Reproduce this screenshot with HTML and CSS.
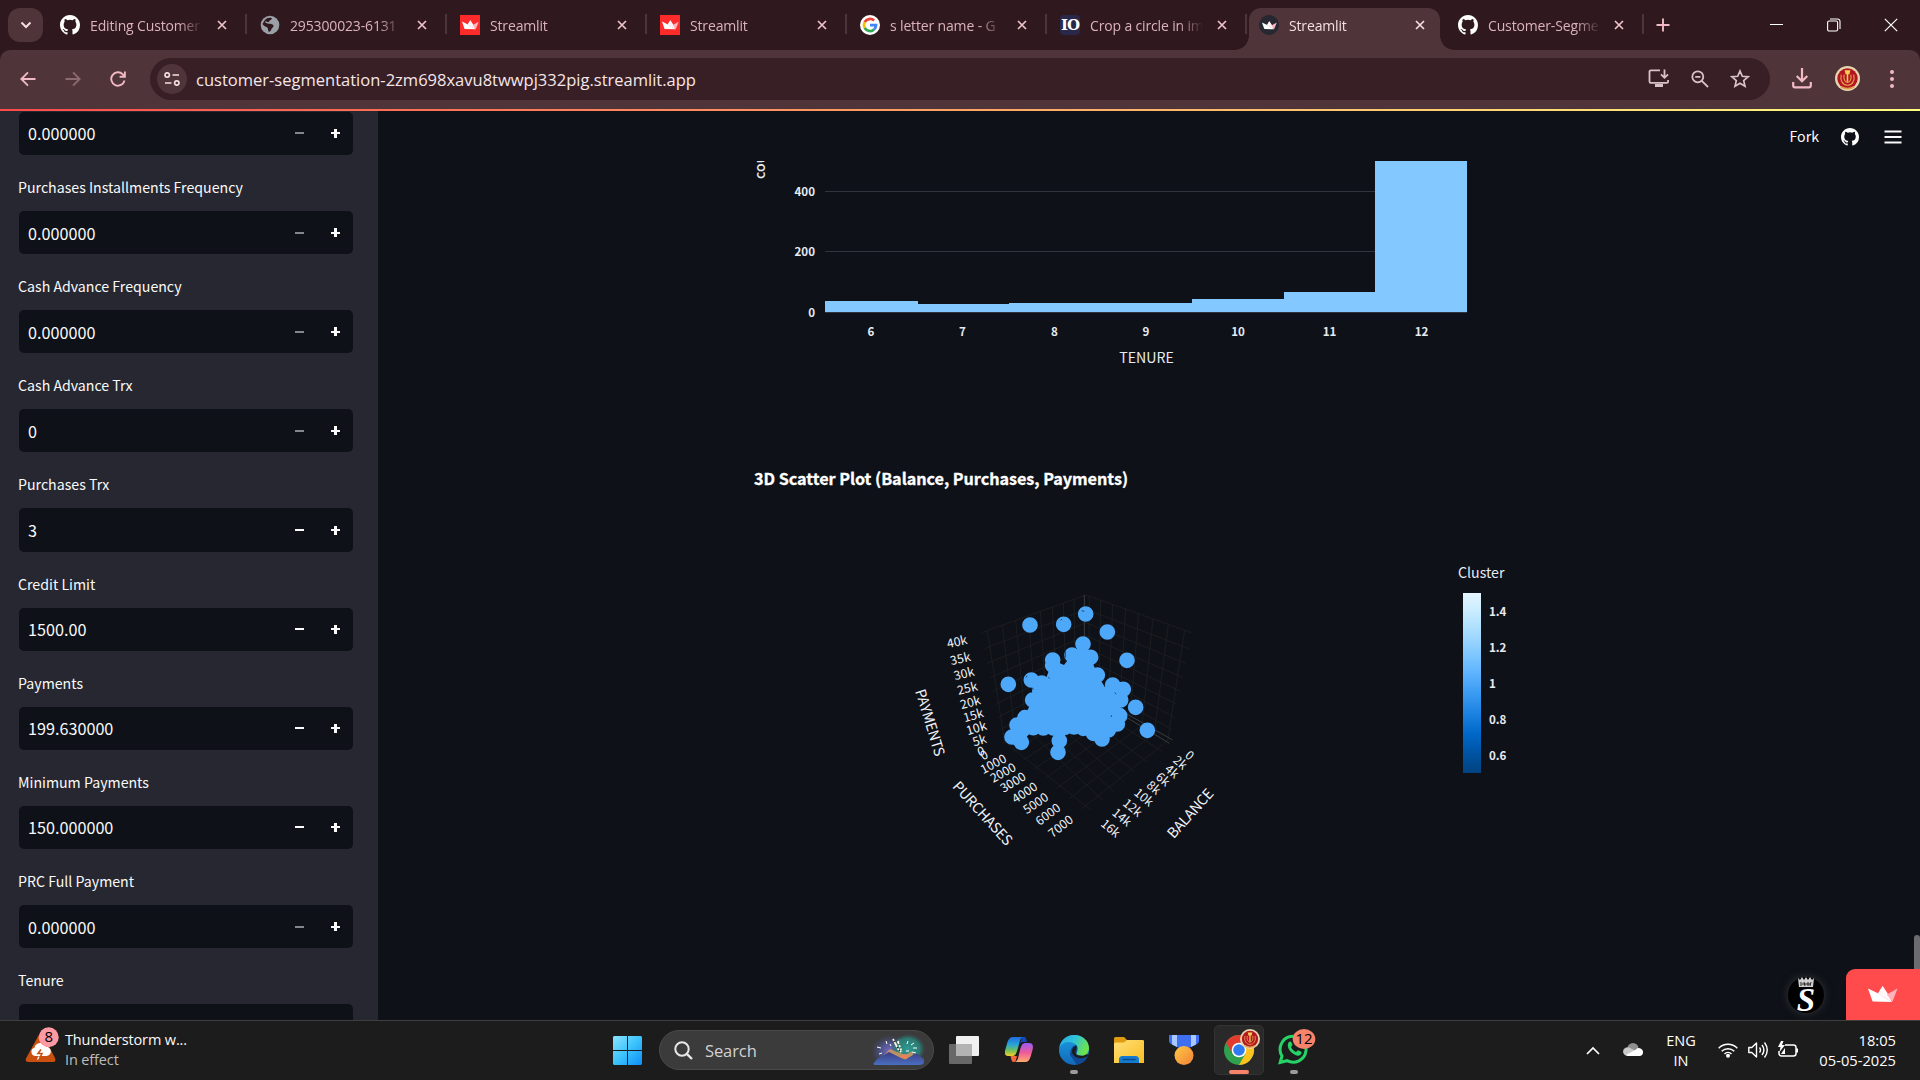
FILE: index.html
```html
<!DOCTYPE html>
<html lang="en">
<head>
<meta charset="utf-8">
<title>Streamlit</title>
<link rel="stylesheet" href="styles.css">
</head>
<body>
<svg class="defs" width="0" height="0" aria-hidden="true">
  <defs>
    <symbol id="github" viewBox="0 0 16 16"><path fill="#fff" d="M8 0C3.58 0 0 3.58 0 8c0 3.54 2.29 6.53 5.47 7.59.4.07.55-.17.55-.38 0-.19-.01-.82-.01-1.49-2.01.37-2.53-.49-2.69-.94-.09-.23-.48-.94-.82-1.13-.28-.15-.68-.52-.01-.53.63-.01 1.08.58 1.23.82.72 1.21 1.87.87 2.33.66.07-.52.28-.87.51-1.07-1.78-.2-3.64-.89-3.64-3.95 0-.87.31-1.59.82-2.15-.08-.2-.36-1.02.08-2.12 0 0 .67-.21 2.2.82a7.6 7.6 0 0 1 4 0c1.53-1.04 2.2-.82 2.2-.82.44 1.1.16 1.92.08 2.12.51.56.82 1.27.82 2.15 0 3.07-1.87 3.75-3.65 3.95.29.25.54.73.54 1.48 0 1.07-.01 1.93-.01 2.2 0 .21.15.46.55.38A8.01 8.01 0 0 0 16 8c0-4.42-3.58-8-8-8z"/></symbol>
    <symbol id="crown" viewBox="0 0 30 17"><path fill="#fff" d="M0 2.5 10.5 7.6 24 16 4.6 15.6Z"/><path fill="#ffc9cf" d="M14.6 0 20.3 8.3 24 16 10 7.4Z"/><path fill="#fff" opacity=".85" d="M14.6 0 10 7.4 24 16 19 7Z"/><path fill="#ffb3bb" d="M29.5 2.6 24.5 15.6 18.8 8.4Z"/></symbol>
    <symbol id="close" viewBox="0 0 10 10"><path d="M1 1l8 8M9 1L1 9" fill="none" stroke="currentColor" stroke-width="1.7"/></symbol>
    <symbol id="crest" viewBox="0 0 26 26"><circle cx="13" cy="13" r="13" fill="#e6d6ae"/><circle cx="13" cy="13" r="10.6" fill="#b5151f"/><path d="M6.5 9c-1.5 6 1.5 11 6.500 11s8-5 6.500-11M9.500 9c-.8 4.500.7 8 3.500 8s4.300-3.500 3.500-8" fill="none" stroke="#dfa04f" stroke-width="1.200"/><path d="M6 21.500q7 4 14 0" fill="none" stroke="#dfa04f" stroke-width="1.800"/><path d="M10 4.500h6l-1 4h-1.200v8h-1.600v-8H11z" fill="#f2cf57"/></symbol>
    <linearGradient id="win" x1="0" y1="0" x2="1" y2="1"><stop offset="0" stop-color="#8be3fd"/><stop offset=".5" stop-color="#3cc3fb"/><stop offset="1" stop-color="#0c8df6"/></linearGradient>
    <linearGradient id="scale" x1="0" y1="0" x2="0" y2="1"><stop offset="0" stop-color="#e4f5ff"/><stop offset=".11" stop-color="#c7ebff"/><stop offset=".22" stop-color="#a6dcff"/><stop offset=".33" stop-color="#83c9ff"/><stop offset=".44" stop-color="#60b4ff"/><stop offset=".55" stop-color="#3d9df3"/><stop offset=".67" stop-color="#1c83e1"/><stop offset=".78" stop-color="#0068c9"/><stop offset=".89" stop-color="#0054a3"/><stop offset="1" stop-color="#004280"/></linearGradient>
  </defs>
</svg>

<header class="tabstrip">
  <button class="tab-search"><svg width="12" height="8" viewBox="0 0 12 8"><path d="M1.500 1.500 6 6l4.500-4.500" fill="none" stroke="#f3dfe1" stroke-width="2"/></svg></button>
  <div class="tab"><svg class="fav"><use href="#github"/></svg><span class="name">Editing Customer</span><svg class="x"><use href="#close"/></svg></div>
  <div class="tab"><svg class="fav" viewBox="0 0 20 20"><circle cx="10" cy="10" r="9.300" fill="#9aa0a6"/><path d="M4.500 5.500C7 2.500 10 2.500 12 3.300c-.5 2-3.500 2-3 4.200.6 1.800 4 1 4.500 3.200.3 1.800-1.500 1.600-2 3.300-.4 1.500-1.500 2.500-2.500 3-1.500-1.500-.5-3-1.500-4.200C6.500 11.600 4 11.500 2.500 9" fill="#2f191e"/><path d="M5.500 6.500c1 2 3.500.5 4.500 2" stroke="#9aa0a6" stroke-width="1.500" fill="none"/></svg><span class="name">295300023-6131</span><svg class="x"><use href="#close"/></svg></div>
  <div class="tab"><span class="fav red"><svg width="17" height="10"><use href="#crown"/></svg></span><span class="name">Streamlit</span><svg class="x"><use href="#close"/></svg></div>
  <div class="tab"><span class="fav red"><svg width="17" height="10"><use href="#crown"/></svg></span><span class="name">Streamlit</span><svg class="x"><use href="#close"/></svg></div>
  <div class="tab"><svg class="fav" viewBox="0 0 20 20"><circle cx="10" cy="10" r="10" fill="#fff"/><g fill="none" stroke-width="2.800"><path d="M14.100 5.500A6 6 0 0 0 4.700 7.200" stroke="#ea4335"/><path d="M4.700 7.200a6 6 0 0 0 0 5.600" stroke="#fbbc05"/><path d="M4.700 12.800a6 6 0 0 0 9.300 1.700" stroke="#34a853"/><path d="M14 14.500a6 6 0 0 0 2-4.300h-6" stroke="#4285f4"/></g></svg><span class="name">s letter name - G</span><svg class="x"><use href="#close"/></svg></div>
  <div class="tab"><span class="fav io">IO</span><span class="name">Crop a circle in im</span><svg class="x"><use href="#close"/></svg></div>
  <div class="tab active"><span class="fav dark"><svg width="15" height="9"><use href="#crown"/></svg></span><span class="name">Streamlit</span><svg class="x"><use href="#close"/></svg></div>
  <div class="tab last"><svg class="fav"><use href="#github"/></svg><span class="name">Customer-Segme</span><svg class="x"><use href="#close"/></svg></div>
  <svg class="plus" width="14" height="14" viewBox="0 0 14 14"><path d="M7 .5v13M.5 7h13" stroke="#f0b9c3" stroke-width="1.900"/></svg>
  <div class="winbtns">
    <svg width="14" height="14" viewBox="0 0 14 14"><path d="M0 6.500h13" stroke="#fff"/></svg>
    <svg width="14" height="14" viewBox="0 0 14 14"><rect x=".6" y="3" width="10" height="10" rx="1.500" fill="none" stroke="#fff" stroke-width="1.100"/><path d="M3 1h7.500A2.500 2.500 0 0 1 13 3.500V11" fill="none" stroke="#fff" stroke-width="1.100"/></svg>
    <svg width="14" height="14" viewBox="0 0 14 14"><path d="M.8.800l12.400 12.400M13.200.800.8 13.200" stroke="#fff" stroke-width="1.200"/></svg>
  </div>
</header>

<nav class="toolbar">
  <div class="navbtns">
    <svg width="16" height="16" viewBox="0 0 16 16"><path d="M15.500 8H1.500M8 1.300 1.300 8 8 14.700" fill="none" stroke="#f0b9c3" stroke-width="1.900"/></svg>
    <svg width="16" height="16" viewBox="0 0 16 16"><path d="M.5 8h14M8 1.300 14.700 8 8 14.700" fill="none" stroke="#8b6b71" stroke-width="1.900"/></svg>
    <svg width="16" height="16" viewBox="0 0 16 16"><path d="M14.500 9.500A6.700 6.700 0 1 1 12.800 3.300L14.800 5.300M14.900.500v5.300H9.600" fill="none" stroke="#f0b9c3" stroke-width="1.900"/></svg>
  </div>
  <div class="omnibox">
    <span class="site"><svg width="16" height="14" viewBox="0 0 16 14"><g fill="none" stroke="#f3dfe1" stroke-width="1.700"><circle cx="3.200" cy="3" r="2.200"/><path d="M8.500 3H15M1 11h6.500"/><circle cx="12.800" cy="11" r="2.200"/></g></svg></span>
    <span class="url">customer-segmentation-2zm698xavu8twwpj332pig.streamlit.app</span>
    <div class="omni-actions">
      <svg width="22" height="19" viewBox="0 0 22 19"><path d="M12 1.300H2.800A1.300 1.300 0 0 0 1.500 2.600v10a1.300 1.300 0 0 0 1.300 1.300h16a1.300 1.300 0 0 0 1.300-1.300V11M16.500.500v8M13 5.300l3.500 3.500L20 5.300" fill="none" stroke="#d8c3c6" stroke-width="1.800"/><path d="M7 15h8v3H7z" fill="#d8c3c6"/></svg>
      <svg width="18" height="18" viewBox="0 0 18 18"><g fill="none" stroke="#d8c3c6" stroke-width="1.800"><circle cx="6.800" cy="6.800" r="5.500"/><path d="M10.800 10.800 17 17M4.200 6.800h5.200"/></g></svg>
      <svg width="20" height="19" viewBox="0 0 20 19"><path d="M10 2l2.300 5.300 5.800.500-4.400 3.800 1.300 5.600-5-3-5 3 1.300-5.600L1.900 7.800l5.800-.5z" fill="none" stroke="#d8c3c6" stroke-width="1.700"/></svg>
    </div>
  </div>
  <svg width="20" height="21" viewBox="0 0 20 21"><path d="M10 0v13M4.700 8l5.300 5.300L15.300 8M1.200 14v3.500a1.800 1.800 0 0 0 1.800 1.800h14a1.800 1.800 0 0 0 1.800-1.800V14" fill="none" stroke="#f0b9c3" stroke-width="2.200"/></svg>
  <svg class="profile" width="25" height="25"><use href="#crest"/></svg>
  <svg width="6" height="20" viewBox="0 0 6 20"><g fill="#f0b9c3"><circle cx="3" cy="3" r="2"/><circle cx="3" cy="10" r="2"/><circle cx="3" cy="17" r="2"/></g></svg>
</nav>
<div class="decoration"></div>

<div class="app">
  <aside class="sidebar">
    <div class="field"><label></label><div class="num"><span>0.000000</span><i class="minus off"></i><i class="add"></i></div></div>
    <div class="field"><label>Purchases Installments Frequency</label><div class="num"><span>0.000000</span><i class="minus off"></i><i class="add"></i></div></div>
    <div class="field"><label>Cash Advance Frequency</label><div class="num"><span>0.000000</span><i class="minus off"></i><i class="add"></i></div></div>
    <div class="field"><label>Cash Advance Trx</label><div class="num"><span>0</span><i class="minus off"></i><i class="add"></i></div></div>
    <div class="field"><label>Purchases Trx</label><div class="num"><span>3</span><i class="minus"></i><i class="add"></i></div></div>
    <div class="field"><label>Credit Limit</label><div class="num"><span>1500.00</span><i class="minus"></i><i class="add"></i></div></div>
    <div class="field"><label>Payments</label><div class="num"><span>199.630000</span><i class="minus"></i><i class="add"></i></div></div>
    <div class="field"><label>Minimum Payments</label><div class="num"><span>150.000000</span><i class="minus"></i><i class="add"></i></div></div>
    <div class="field"><label>PRC Full Payment</label><div class="num"><span>0.000000</span><i class="minus off"></i><i class="add"></i></div></div>
    <div class="field"><label>Tenure</label><div class="num"></div></div>
  </aside>

  <main class="main">
    <div class="apphead">
      <span>Fork</span>
      <svg width="18" height="18"><use href="#github"/></svg>
      <svg width="18" height="14" viewBox="0 0 18 14"><path d="M.5 1.500h17M.5 7h17M.5 12.500h17" stroke="#fafafa" stroke-width="2"/></svg>
    </div>
    <svg class="charts" width="1542" height="859" viewBox="378 161 1542 859">
      <g class="hist">
        <path d="M825 191.500h642M825 251.500h642" stroke="#31333f"/>
        <path d="M825 312V301h93v3h91v-1h183v-4h92v-7h91V161h92v151z" fill="#83c9ff"/>
        <path d="M825 312.500h642" stroke="#31333f"/>
        <g class="tick end"><text x="815" y="196">400</text><text x="815" y="256">200</text><text x="815" y="317">0</text></g>
        <g class="tick mid"><text x="871" y="336">6</text><text x="962.500" y="336">7</text><text x="1054.500" y="336">8</text><text x="1146" y="336">9</text><text x="1238" y="336">10</text><text x="1329.500" y="336">11</text><text x="1421.500" y="336">12</text></g>
        <text class="axis mid" x="1146.500" y="363">TENURE</text>
        <text class="axis side" transform="translate(764.500 179) rotate(-90)">count</text>
      </g>
      <text class="title" x="754" y="484.500" textLength="374">3D Scatter Plot (Balance, Purchases, Payments)</text>
      <g transform="translate(890 570) scale(.33333)">
        <path class="grid" d="M552 88 557 380M520 99l10 299M487 111l15 305M451 124l20 311M415 137l25 318M377 151l31 324M337 166l39 331M292 182l52 334
          M275 188 588 75M284 236 588 118M292 280 588 158M300 323 588 197M308 364 588 233M317 403 588 267M325 442 588 300M331 480 588 332M336 520 588 365
          M598 78 596 366M632 90 626 384M668 103 656 403M707 117 688 423M746 131 720 443M789 147 756 466M835 163 793 490M884 181 833 512
          M905 188 588 75M896 236 588 118M887 280 588 158M879 323 588 197M871 364 588 233M862 403 588 267M854 442 588 300M848 480 588 332
          M557 380 815 543M530 398 775 578M502 416 735 607M471 435 703 637M440 455 672 665M408 475 640 692M344 516 603 720
          M626 384 370 545M656 403 400 570M688 423 432 597M720 443 466 625M756 466 500 655M793 490 537 686M833 512 573 718"/>
        <path class="zero" d="M583 75V365L838 520M588 362 848 510"/>
        <path class="dots" d="M579 222 602 262 622 315 645 352 668 345 700 358 692 390 690 437 682 462 650 485 636 507 610 490 580 484 552 480 520 484 508 512 490 482 460 482 430 480 394 517 366 501 380 465 405 435 428 390 424 330 450 330 470 320 488 270 522 285 545 255Z"/>
        <path class="spots" d="M420 165h0M521 163h0M587 132h0M652 186h0M711 271h0M737 412h0M772 481h0M355 343h0M504 547h0M579 222h0M546 255h0M602 262h0M488 270h0M488 286h0M424 330h0M428 390h0M381 465h0M366 501h0M394 517h0M622 315h0M668 345h0M700 358h0M692 390h0M689 437h0M682 462h0M636 507h0M508 512h0M455 339h0M405 443h0M430 473h0M460 474h0M490 474h0M525 472h0M552 471h0M580 475h0M610 490h0M655 480h0"/>
        <path d="M674 368l5 4M664 436v5M575 122l8 2M427 353l3 7M526 243v20M512 151l4-4M407 322l5-4M475 322l4 3" stroke="#0e1117" stroke-width="2"/>
        <g class="t3 mid">
          <text transform="translate(201 215) rotate(-13)" y="13">40k</text><text transform="translate(211 266) rotate(-13)" y="13">35k</text><text transform="translate(222 311) rotate(-14)" y="13">30k</text><text transform="translate(232 355) rotate(-14)" y="13">25k</text><text transform="translate(241 397) rotate(-15)" y="13">20k</text><text transform="translate(250 436) rotate(-16)" y="13">15k</text><text transform="translate(259 474) rotate(-17)" y="13">10k</text><text transform="translate(268 511) rotate(-18)" y="13">5k</text><text transform="translate(273 544) rotate(-18)" y="13">0</text>
          <text transform="translate(282 555) rotate(-27)" y="13">0</text><text transform="translate(310 582) rotate(-28)" y="13">1000</text><text transform="translate(339 608) rotate(-29)" y="13">2000</text><text transform="translate(369 637) rotate(-31)" y="13">3000</text><text transform="translate(404 668) rotate(-33)" y="13">4000</text><text transform="translate(437 700) rotate(-34)" y="13">5000</text><text transform="translate(474 733) rotate(-36)" y="13">6000</text><text transform="translate(512 769) rotate(-38)" y="13">7000</text>
          <text transform="translate(899 556) rotate(40)" y="13">0</text><text transform="translate(871 578) rotate(40)" y="13">2k</text><text transform="translate(846 604) rotate(40)" y="13">4k</text><text transform="translate(819 628) rotate(40)" y="13">6k</text><text transform="translate(791 653) rotate(40)" y="13">8k</text><text transform="translate(762 682) rotate(40)" y="13">10k</text><text transform="translate(728 713) rotate(40)" y="13">12k</text><text transform="translate(696 742) rotate(40)" y="13">14k</text><text transform="translate(662 775) rotate(40)" y="13">16k</text>
        </g>
        <g class="n3 mid">
          <text transform="translate(119 458) rotate(73)" y="14" textLength="208">PAYMENTS</text>
          <text transform="translate(277 731) rotate(47.500)" y="14" textLength="242">PURCHASES</text>
          <text transform="translate(902 731) rotate(-48)" y="14" textLength="182">BALANCE</text>
        </g>
      </g>
      <g>
        <text class="axis" x="1458" y="577.500">Cluster</text>
        <rect x="1463" y="593" width="18" height="180" fill="url(#scale)"/>
        <g class="tick"><text x="1489" y="616">1.4</text><text x="1489" y="652">1.2</text><text x="1489" y="688">1</text><text x="1489" y="724">0.8</text><text x="1489" y="760">0.6</text></g>
      </g>
    </svg>
    <div class="scrollbar"></div>
    <div class="creator"><svg width="18" height="11" viewBox="0 0 18 11"><path d="M1 1l2 2 2-3 2 3 2-3 2 3 2-3 2 3 2-2-1 9H2z" fill="#cfcfcf"/><path d="M4 5v4M7 5l1 4M11 5v4M14 5l-1 4M5 7h8" stroke="#222"/></svg><b>S</b></div>
    <div class="badge"><svg width="30" height="17"><use href="#crown"/></svg></div>
  </main>
</div>

<footer class="taskbar">
  <div class="weather">
    <svg width="36" height="38" viewBox="0 0 36 38"><path d="M13.500 8.500a3 3 0 0 1 5 0L30 31q1.500 4-2.500 4h-24Q-.5 35 1.200 31z" fill="#ca5010"/><path d="M10 29a4.200 4.200 0 0 1-.5-8.200 6 6 0 0 1 11.500-1 4.600 4.600 0 0 1 .5 9.200z" fill="#fff"/><path d="M16 22.500l-3 4h4l-2.500 5" fill="none" stroke="#ca5010" stroke-width="1.600"/><path d="M14 29.500l-1.500 3" stroke="#fff" stroke-width="1.200"/><circle cx="23.700" cy="10.200" r="10" fill="#ff99a4"/><text x="23.700" y="15.200" class="count">8</text></svg>
    <div><p>Thunderstorm w...</p><p class="dim">In effect</p></div>
  </div>
  <div class="apps">
    <svg class="start" width="29" height="29" viewBox="0 0 29 29"><path d="M1 0h13v14H0V1zM15 0h13l1 1v13H15zM0 15h14v14H1l-1-1zM15 15h14v13l-1 1H15z" fill="url(#win)"/></svg>
    <div class="search">
      <svg width="19" height="19" viewBox="0 0 19 19"><circle cx="8" cy="8" r="6.700" fill="none" stroke="#e8e8e8" stroke-width="2"/><path d="M12.800 12.800 18 18" stroke="#e8e8e8" stroke-width="2.400"/></svg>
      <span>Search</span>
      <svg class="spark" width="54" height="32" viewBox="0 0 54 32">
        <defs><radialGradient id="ga"><stop offset="0" stop-color="#7d6cc9"/><stop offset=".5" stop-color="#5560a8" stop-opacity=".7"/><stop offset="1" stop-color="#444c86" stop-opacity="0"/></radialGradient><radialGradient id="gb"><stop offset="0" stop-color="#2d9b93"/><stop offset=".7" stop-color="#2b8078" stop-opacity=".9"/><stop offset="1" stop-color="#2b6a68" stop-opacity="0"/></radialGradient><linearGradient id="gm" x1="0" y1="0" x2="0" y2="1"><stop offset="0" stop-color="#3b3d84"/><stop offset="1" stop-color="#4a6fc0"/></linearGradient></defs>
        <ellipse cx="19" cy="17" rx="19" ry="16" fill="url(#ga)"/><ellipse cx="37" cy="15" rx="17" ry="15" fill="url(#gb)"/>
        <path d="M10 24l9-9 7 3 9 3 6-4 3 8z" fill="#c89560" opacity=".9"/><path d="M28 23l6-3 4 1-3 5z" fill="#e8825a"/>
        <path d="M2 30l4-5 12-7 16 8 11-7 8 6v3c0 2-2 3-5 3H4z" fill="url(#gm)"/>
        <path d="M22 5l5 10 3 3M24 11l5-5M27 8l4 10" stroke="#fff4da" stroke-width="1.800" stroke-dasharray="2 1.500"/><path d="M6 13l4 1M8 20l3-1M15 7l1 3M19 10l1 2M37 7l-1 3M43 9l-3 2M46 14h-4M45 19l-4-1M35 17h3" stroke="#fff"/>
      </svg>
    </div>
    <svg class="i-task" width="30" height="28" viewBox="0 0 30 28"><rect x="7" y="0" width="23" height="20" rx="1" fill="#f0f0f0"/><rect x="0" y="8" width="23" height="20" rx="1" fill="#7c7c7c" opacity=".8"/><path d="M7 8h16v12H7z" fill="#b3b3b3"/></svg>
    <svg class="i-cop" width="28" height="26" viewBox="0 0 28 26"><defs><linearGradient id="c1" x1="0" y1="0" x2="0" y2="1"><stop offset="0" stop-color="#1f6be0"/><stop offset=".4" stop-color="#27a5d8"/><stop offset=".7" stop-color="#6fbf5c"/><stop offset="1" stop-color="#f3cf27"/></linearGradient><linearGradient id="c2" x1="0" y1="0" x2="0" y2="1"><stop offset="0" stop-color="#9a5bf5"/><stop offset=".5" stop-color="#ee5a9b"/><stop offset="1" stop-color="#ffab6b"/></linearGradient></defs><path d="M17 0h2c2 0 2 1 3 5h-4c-2 0-3 1-3.500 3z" fill="#1746b8"/><path d="M8 0h10c-3 1-3 4-5 11-2 7-3 8-6 8H4c-4 0-5-2-3.500-7L2.500 5C3.500 2 5 0 8 0z" fill="url(#c1)"/><path d="M20 25H9c4 0 4-4 6-12 1.500-6 3-7 6-7h3c4 0 4.500 3 3.500 7l-2 7c-1 3-2.500 5-5.500 5z" fill="url(#c2)"/><path d="M7 19h5l-1 4c-.5 1.500-1 2-2.500 2C6.500 24.500 6.500 23 5.500 19z" fill="#f2683c"/></svg>
    <svg class="i-edge run" width="30" height="30" viewBox="0 0 30 30"><defs><linearGradient id="e1" x1="0" y1="0" x2="1" y2=".4"><stop offset="0" stop-color="#2aa6e0"/><stop offset=".5" stop-color="#2fc2dd"/><stop offset="1" stop-color="#6be24f"/></linearGradient><linearGradient id="e2" x1="0" y1="0" x2="0" y2="1"><stop offset="0" stop-color="#1b9de2"/><stop offset="1" stop-color="#1268b8"/></linearGradient></defs><circle cx="15" cy="15" r="15" fill="url(#e2)"/><path d="M11 20c0-5 2-9 6-10 3 2 1 4 1 6 0 4 6 6 10 4l-2 6-8 4z" fill="#0f4a94"/><path d="M13 17c0-4 2-6 4.500-6 0 4-1 4.500-1 6.500 0 3 6 5 11 1.500l2.500 1.500c-6 4.500-15.500 3.500-17-3.500z" fill="#1c1c1c"/><path d="M.3 13C1.500 5 8 0 15 0c9 0 15 6 15 13 0 5-3 7.500-7 7.500-3.500 0-5.500-1-5.500-2.300 0-1 1.300-1.700 1.300-4.200C18.800 9 14 7 9.500 7 5 7 1.500 10 .3 13z" fill="url(#e1)"/><rect x="11" y="35" width="8" height="4" rx="2" fill="#9b9b9b"/></svg>
    <svg class="i-exp" width="30" height="26" viewBox="0 0 30 26"><defs><linearGradient id="f1" x1="0" y1="0" x2="1" y2="1"><stop offset="0" stop-color="#ffdf76"/><stop offset="1" stop-color="#f9bd24"/></linearGradient></defs><path d="M0 6V1.500Q0 0 1.500 0H10l3 3h15.500Q30 3 30 4.500V8H0z" fill="#e09b10"/><path d="M0 7q0-1.500 1.500-1.500H10L13 3h15.500Q30 3 30 4.500V26H0z" fill="url(#f1)"/><path d="M5 26v-3.500Q5 19 8.500 19h13q3.500 0 3.500 3.500V26z" fill="#127bd0"/><path d="M8.500 22.500h13" stroke="#0a4a8b" stroke-width="1.500"/></svg>
    <svg class="i-medal" width="30" height="30" viewBox="0 0 30 30"><defs><linearGradient id="m1" x1="0" y1="0" x2="1" y2="1"><stop offset="0" stop-color="#ffc842"/><stop offset="1" stop-color="#f1823b"/></linearGradient></defs><path d="M0 0h30v6q0 2-2 3l-8 4H10L2 9Q0 8 0 6z" fill="#3d6ff0"/><path d="M3 0h5v12L3 9.500zM22 0h5v9.500L22 12z" fill="#a9c8ff"/><circle cx="15" cy="20.500" r="9.500" fill="url(#m1)"/></svg>
    <div class="i-chrome">
      <svg width="36" height="36" viewBox="0 0 36 36"><circle cx="15" cy="21" r="15" fill="#2fa04d"/><path d="M2 13.500A15 15 0 0 1 28 13.500H15L8.500 24.800z" fill="#e33b2e"/><path d="M28 13.500A15 15 0 0 1 15 36L21.500 24.800 19 13.500z" fill="#fcc31e"/><circle cx="15" cy="21" r="7.300" fill="#fff"/><circle cx="15" cy="21" r="5.800" fill="#2f7cf0"/><use href="#crest" x="16" y="0" width="20" height="20"/></svg>
    </div>
    <svg class="i-wa run" width="37" height="37" viewBox="0 0 37 37"><path d="M2.200 34.500 4 28a13 13 0 1 1 5 4.700z" fill="none" stroke="#25d366" stroke-width="3"/><path d="M10.500 14.500c1-1.500 2.500-1.500 3 0l1 2.500-1.500 2c1 2.500 3 4 5 5l2-1.800 2.800 1.300c1.200.7 1 2-.3 3.200-2 1.800-5 .8-8-1.500-3.500-2.500-6-7-4-10.700z" fill="#25d366"/><ellipse cx="26" cy="11" rx="11.300" ry="10" fill="#f7846a"/><text x="26" y="16" class="count">12</text><rect x="12" y="42" width="8" height="4" rx="2" fill="#9b9b9b"/></svg>
  </div>
  <div class="tray">
    <svg width="14" height="9" viewBox="0 0 14 9"><path d="M1 8l6-6 6 6" fill="none" stroke="#fff" stroke-width="1.700"/></svg>
    <svg class="cloud" width="20" height="13" viewBox="0 0 20 13"><circle cx="10" cy="5.500" r="5.500" fill="#8f8f8f"/><path d="M0 8.500a4.500 4.500 0 0 1 7-3.500l6 3-8 5A4.600 4.600 0 0 1 0 8.500z" fill="#c9c9c9"/><path d="M3 12 13 6.500a4 4 0 0 1 7 3c0 2-1.500 3.500-3.500 3.500H5z" fill="#fff"/></svg>
    <div class="lang"><p>ENG</p><p>IN</p></div>
    <svg class="wifi" width="20" height="16" viewBox="0 0 20 16"><g fill="none" stroke="#fff" stroke-width="1.500"><path d="M.7 6.200a13.200 13.200 0 0 1 18.600 0M3.700 9.200a9 9 0 0 1 12.600 0M6.500 12a5 5 0 0 1 7 0"/></g><circle cx="10" cy="13.800" r="2" fill="#fff"/></svg>
    <svg class="vol" width="20" height="18" viewBox="0 0 20 18"><g fill="none" stroke="#fff" stroke-width="1.400"><path d="M.8 6.500h3L8.500 2v14L3.800 11.500h-3z" stroke-linejoin="round"/><path d="M11.500 6.500q2 2.500 0 5M14 4q3.800 5 0 10M16.500 1.500q5.500 7.500 0 15"/></g></svg>
    <svg width="20" height="18" viewBox="0 0 20 18"><path d="M7 4h8.500A2.500 2.500 0 0 1 18 6.500v6a2.500 2.500 0 0 1-2.500 2.500h-12A2.500 2.500 0 0 1 1 12.500V10" fill="none" stroke="#fff" stroke-width="1.500"/><path d="M19 7.500v4" stroke="#fff" stroke-width="2"/><path d="M3 0 0 6h2.500L1.500 11 7 4H4L5.500 0zM3 13l4-6v6z" fill="#fff"/></svg>
    <div class="clock"><p>18:05</p><p>05-05-2025</p></div>
  </div>
</footer>
</body>
</html>
```
FILE: styles.css
```css
* { box-sizing: border-box; }
body {
  margin: 0; width: 1920px; height: 1080px; overflow: hidden;
  display: flex; flex-direction: column;
  background: #0e1117; color: #fafafa;
  font-family: "Open Sans", "Noto Sans", sans-serif;
}
p { margin: 0; }
svg { display: block; flex: none; }
.defs { position: absolute; }

/* Browser tabs */
.tabstrip { height: 50px; flex: none; display: flex; background: #2f191e; padding-left: 8px; }
.tab-search {
  width: 35px; height: 34px; margin: 8px 3px 0 0; padding: 0; border: 0; border-radius: 12px;
  background: #4f3439; display: flex; align-items: center; justify-content: center;
}
.tab {
  position: relative; width: 200px; height: 50px; padding: 0 19px 0 14px;
  display: flex; align-items: center; color: #dcb3ba; font-size: 14px;
}
.tab::after { content: ""; position: absolute; right: -1px; top: 14px; width: 2px; height: 20px; background: #4f3439; }
.fav { width: 20px; height: 20px; flex: none; display: flex; align-items: center; justify-content: center; }
.fav.red { background: #ff2b2b; }
.fav.dark { background: #262730; border-radius: 50%; }
.fav.io { background: #29284a; border-radius: 4px; color: #fff; font: bold 15px/20px "DejaVu Serif", serif; letter-spacing: -1px; }
.name {
  flex: 1; margin: 1px 8px 0 10px; overflow: hidden; white-space: nowrap; letter-spacing: -.15px;
  -webkit-mask-image: linear-gradient(90deg, #000 88px, transparent 113px);
}
.x { width: 10px; height: 10px; color: #efc3ca; }
.tab.active { width: 199px; color: #f3dfe1; padding-left: 13px; padding-right: 20px; z-index: 0; }
.tab.active .x { color: #f3dfe1; }
.tab.active::after { left: 3px; right: 5px; top: 8px; bottom: 0; width: auto; height: auto; border-radius: 12px 12px 0 0; z-index: -1; }
.tab.active::before {
  content: ""; position: absolute; left: -11px; right: -9px; bottom: 0; height: 14px; z-index: -1;
  background: radial-gradient(circle at 0 0, transparent 13.500px, #4f3439 14px) 0 0/14px 14px no-repeat,
              radial-gradient(circle at 100% 0, transparent 13.500px, #4f3439 14px) 100% 0/14px 14px no-repeat;
}
.tab.last { width: 198px; padding-left: 13px; }
.plus { margin: 18px 0 0 13px; }
.winbtns { margin: 18px 22px 0 auto; display: flex; gap: 43px; }

/* Address bar */
.toolbar {
  height: 59px; flex: none; display: flex; align-items: center; padding: 0 25px 2px 20px;
  background: #4f3439; border-radius: 10px 10px 0 0; box-shadow: 0 -12px 0 #2f191e;
  position: relative; z-index: -1;
}
.navbtns { display: flex; gap: 29px; width: 130px; }
.omnibox { width: 1620px; height: 42px; border-radius: 21px; background: #381f25; display: flex; align-items: center; padding: 0 20px 0 7px; }
.site { width: 30px; height: 30px; border-radius: 50%; background: #4f3439; display: flex; align-items: center; justify-content: center; }
.url { margin: 2px 0 0 9px; font-size: 16.520px; color: #f5e6e8; white-space: nowrap; }
.omni-actions { margin-left: auto; display: flex; align-items: center; gap: 21px; }
.toolbar > svg { margin-left: 22px; }
.toolbar > .profile { margin-left: 23px; }
.toolbar > .profile + svg { margin-left: 29px; }
.decoration { height: 2px; flex: none; background: linear-gradient(90deg, #ff4b4b, #fffd80); }

/* Streamlit app */
.app { height: 909px; flex: none; display: flex; overflow: hidden; font-family: "Noto Sans CJK SC", "Noto Sans", sans-serif; }
.sidebar { width: 378px; flex: none; background: #262730; padding: 0 25px 0 19px; margin-top: -55.100px; }
.field { height: 99.150px; flex: none; display: flex; flex-direction: column; }
.field label { height: 55.950px; font-size: 14.170px; line-height: 20px; padding-top: 22px; margin-left: -1px; color: #fafafa; }
.num { height: 43.200px; border-radius: 5px; background: #0e1117; display: flex; align-items: center; padding: 0 13px 0 9px; font-size: 16.200px; line-height: 24px; }
.num span { flex: 1; }
.num i { width: 9px; height: 9px; margin-left: 27px; background: linear-gradient(#fafafa, #fafafa) 0 50%/9px 2px no-repeat; }
.num .off { opacity: .5; }
.num .add { background: linear-gradient(#fafafa, #fafafa) 0 50%/9px 2px no-repeat, linear-gradient(#fafafa, #fafafa) 50% 0/3px 9px no-repeat; }
.main { flex: 1; position: relative; display: flex; flex-direction: column; }
.apphead { height: 50px; flex: none; display: flex; align-items: center; justify-content: flex-end; gap: 23px; padding: 1px 18px 0 0; font-size: 14.170px; }
.apphead span { margin-top: -1px; margin-right: -1px; }
.apphead svg:last-child { margin-left: 2px; }
.tick { font-size: 11.600px; font-weight: 700; fill: #e6eaf1; }
.axis { font-size: 14.170px; fill: #e6eaf1; }
.side { font-weight: 500; }
.end { text-anchor: end; }
.mid { text-anchor: middle; }
.title { font-size: 16.200px; font-weight: 700; fill: #fff; stroke: #fff; stroke-width: .3px; }
.grid { fill: none; stroke: #1e1f21; stroke-width: 2.500; }
.zero { fill: none; stroke: #444; stroke-width: 2.500; }
.dots { fill: #4ea8fa; }
.spots { fill: none; stroke: #4ea8fa; stroke-width: 47; stroke-linecap: round; }
.t3 { font-size: 37px; fill: #f0f3f7; }
.n3 { font-size: 43px; fill: #f0f3f7; }
.scrollbar { position: absolute; right: 0; top: 824px; width: 6px; height: 60px; background: #6b6c70; border-radius: 3px 3px 0 0; }
.badge { position: absolute; right: 0; bottom: 0; width: 74px; height: 51px; border-radius: 9px 0 0 0; background: #ff4b4b; display: flex; align-items: center; justify-content: center; }
.creator {
  position: absolute; left: 1410px; top: 866px; width: 36px; height: 36px; border-radius: 50%;
  background: #000; box-shadow: 0 0 8px #34363a; color: #fff; display: flex; flex-direction: column; align-items: center;
}
.creator b { font: italic 700 33px/24px "Liberation Serif", serif; height: 24px; }

/* Taskbar */
.taskbar { height: 60px; flex: none; border-top: 1px solid #3d3d3d; background: #1c1c1c; display: grid; grid-template-columns: 613px 973px 1fr; font-size: 14.500px; line-height: 20px; }
.weather { display: flex; padding: 6px 0 0 25px; gap: 4px; }
.weather p { margin-top: 3px; margin-bottom: -3px; white-space: nowrap; letter-spacing: -.13px; }
.weather .dim { color: #bdbdbd; }
.count { font-size: 15px; fill: #000; text-anchor: middle; }
.apps { display: flex; align-items: flex-start; }
.start { margin-top: 15px; }
.search { width: 275px; height: 40px; margin: 9px 0 0 17px; border-radius: 20px; background: #3b3b3b; border: 1px solid #4a4a4a; display: flex; align-items: center; padding: 0 8px 0 14px; font-size: 16.500px; color: #d2d2d2; }
.search span { margin-left: 12px; flex: 1; padding-top: 2px; letter-spacing: -.1px; }
.i-task { margin: 15px 0 0 15px; }
.i-cop { margin: 16px 0 0 26px; }
.i-edge { margin: 14px 0 0 26px; }
.i-exp { margin: 16px 0 0 25px; }
.i-medal { margin: 14px 0 0 25px; }
.i-chrome { width: 50px; height: 50px; margin: 4px 0 0 15px; border: 1px solid #333; border-radius: 5px; background: #292929; padding: 3px 0 0 9px; position: relative; }
.i-chrome::after { content: ""; position: absolute; left: 14px; bottom: 0; width: 20px; height: 4px; border-radius: 2px; background: #f7846a; }
.i-wa { margin: 7px 0 0 14px; }
.run { overflow: visible; }
.tray { display: flex; align-items: flex-start; color: #fff; }
.tray > svg { margin-top: 25px; }
.tray > .cloud { margin: 22px 0 0 23px; }
.lang { width: 34px; margin: 10px 20px 0 21px; text-align: center; }
.tray > .wifi { margin-top: 21px; }
.tray > .vol, .tray > .vol + svg { margin: 20px 0 0 10px; }
.clock { margin: 9px 24px 0 auto; text-align: right; white-space: nowrap; font-size: 14.700px; }
```
